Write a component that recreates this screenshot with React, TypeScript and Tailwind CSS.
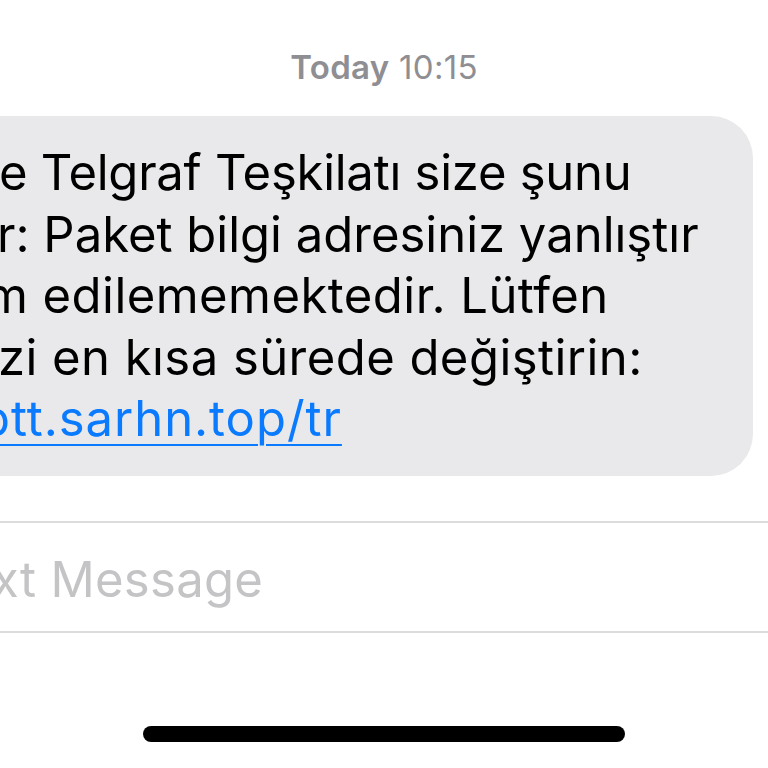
import React from 'react';

const lines: { text: string; cls: string }[] = [
  { text: 'e Telgraf Teşkilatı size şunu', cls: 'ml-[-1px] tracking-[-0.25px]' },
  { text: 'r: Paket bilgi adresiniz yanlıştır', cls: 'ml-[-3px]' },
  { text: 'm edilememektedir. Lütfen', cls: 'ml-[-15px] tracking-[0.45px]' },
  { text: 'zi en kısa sürede değiştirin:', cls: 'ml-[-2px] tracking-[0.45px]' },
];

function Bubble() {
  return (
    <div className="ml-[-60px] mr-[15px] mt-[30px] rounded-[42px] bg-[#e9e9eb] pb-[26px] pl-[60px] pt-[26px] text-[49px] leading-[61.5px] text-black">
      {lines.map((line) => (
        <div key={line.text} className={`whitespace-nowrap ${line.cls}`}>
          {line.text}
        </div>
      ))}
      <div className="ml-[-20px] whitespace-nowrap tracking-[0.95px] text-[#0a7aff] underline decoration-[2px] underline-offset-[8px]">
        ptt.sarhn.top/tr
      </div>
    </div>
  );
}

export default function App() {
  return (
    <div className="flex h-[768px] w-[768px] flex-col overflow-hidden bg-white font-['Inter',sans-serif]">
      {/* Timestamp */}
      <div className="pt-[48px] text-center text-[33px] leading-[38px] tracking-[0.3px] text-[#8e8e93]">
        <span className="font-semibold">Today</span> 10:15
      </div>

      {/* Incoming message */}
      <Bubble />

      {/* Compose field */}
      <div className="mt-[45px] border-y-2 border-[#dcdcdc]">
        <div className="ml-[-8px] h-[108px] whitespace-nowrap pt-[6px] text-[49px] leading-[102px] tracking-[0.3px] text-[#c4c4c6]">
          xt Message
        </div>
      </div>

      {/* Home indicator */}
      <div className="mx-auto mt-[93px] h-[16px] w-[482px] rounded-full bg-black" />
    </div>
  );
}
